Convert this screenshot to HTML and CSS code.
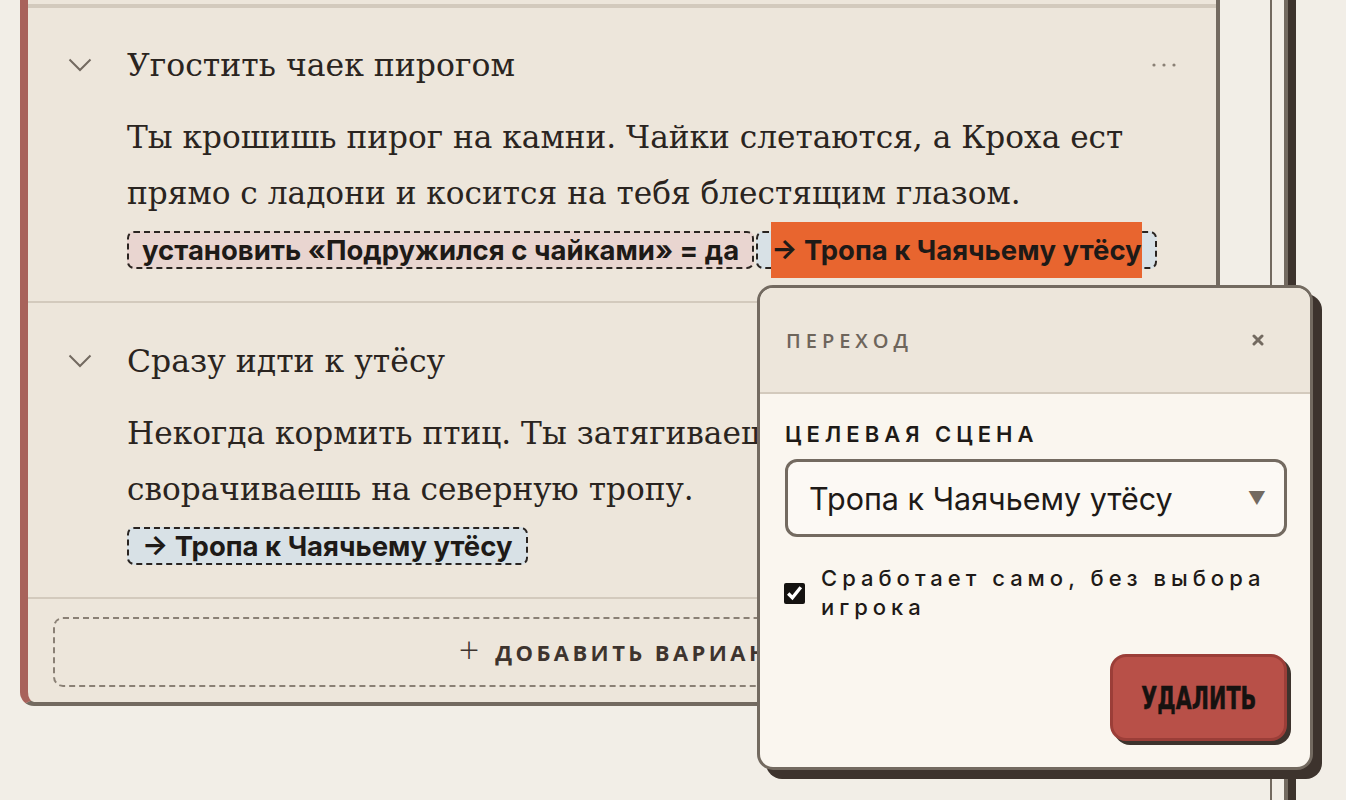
FILE: index.html
```html
<!DOCTYPE html>
<html lang="ru">
<head>
<meta charset="utf-8">
<title>Варианты сцены</title>
<link rel="stylesheet" href="styles.css">
</head>
<body>
<div class="workspace">
  <section class="card">
    <ul class="choices">
      <li class="choice choice--first">
        <div class="choice-head">
          <svg class="chevron" width="24" height="14" viewBox="0 0 24 14" aria-hidden="true"><polyline points="1.5,1.5 12,12 22.5,1.5" fill="none" stroke="currentColor" stroke-width="2"/></svg>
          <h3 class="choice-title">Угостить чаек пирогом</h3>
          <button class="more" type="button" aria-label="Ещё"><svg width="24" height="4" viewBox="0 0 24 4"><circle cx="2" cy="2" r="1.6" fill="currentColor"/><circle cx="12" cy="2" r="1.6" fill="currentColor"/><circle cx="22" cy="2" r="1.6" fill="currentColor"/></svg></button>
        </div>
        <div class="choice-body">
          <p class="choice-text">Ты крошишь пирог на камни. Чайки слетаются, а Кроха ест прямо с ладони и косится на тебя блестящим глазом.</p>
          <div class="effects"><span class="chip chip--set">установить «Подружился с чайками» = да</span><span class="chip chip--goto"><span class="chip-label chip-label--active">→ Тропа к Чаячьему утёсу</span></span></div>
        </div>
      </li>
      <li class="choice">
        <div class="choice-head">
          <svg class="chevron" width="24" height="14" viewBox="0 0 24 14" aria-hidden="true"><polyline points="1.5,1.5 12,12 22.5,1.5" fill="none" stroke="currentColor" stroke-width="2"/></svg>
          <h3 class="choice-title">Сразу идти к утёсу</h3>
          <button class="more" type="button" aria-label="Ещё"><svg width="24" height="4" viewBox="0 0 24 4"><circle cx="2" cy="2" r="1.6" fill="currentColor"/><circle cx="12" cy="2" r="1.6" fill="currentColor"/><circle cx="22" cy="2" r="1.6" fill="currentColor"/></svg></button>
        </div>
        <div class="choice-body">
          <p class="choice-text">Некогда кормить птиц. Ты затягиваешь ремень сумки и сворачиваешь на северную тропу.</p>
          <div class="effects"><span class="chip chip--goto"><span class="chip-label">→ Тропа к Чаячьему утёсу</span></span></div>
        </div>
      </li>
    </ul>
    <div class="add-row">
      <button class="add-choice" type="button"><span class="add-plus">+</span>Добавить вариант</button>
    </div>
  </section>

  <div class="rail"></div>

  <div class="popover" role="dialog" aria-label="Переход">
    <div class="popover-head">
      <span class="popover-title">Переход</span>
      <button class="popover-close" type="button" aria-label="Закрыть"><svg width="12" height="12" viewBox="0 0 12 12"><path d="M2 2 L10 10 M10 2 L2 10" stroke="currentColor" stroke-width="3" stroke-linecap="round"/></svg></button>
    </div>
    <div class="popover-body">
      <div class="field-label">Целевая сцена</div>
      <div class="select">
        <span class="select-value">Тропа к Чаячьему утёсу</span>
        <span class="select-arrow">▼</span>
      </div>
      <label class="check-row">
        <input class="check" type="checkbox" checked>
        <span class="check-text">Сработает само, без выбора игрока</span>
      </label>
      <div class="popover-actions">
        <button class="btn-delete" type="button"><span class="btn-delete-text">Удалить</span></button>
      </div>
    </div>
  </div>
</div>
</body>
</html>
```

FILE: styles.css
```css
* { box-sizing: border-box; }

body {
  margin: 0;
  background: #f2eee7;
  color: #2a2420;
  font-family: "DejaVu Serif", "Liberation Serif", serif;
  overflow: hidden;
}

button {
  font: inherit;
  color: inherit;
  background: none;
  border: 0;
  padding: 0;
  cursor: pointer;
}

.workspace {
  position: relative;
  display: flex;
  align-items: flex-start;
  gap: 50px;
  height: 800px;
  padding-left: 20px;
}

/* ---------- choice card ---------- */

.card {
  flex: 0 0 1200px;
  background: #ede6db;
  border-left: 8px solid #a8625b;
  border-right: 4px solid #736a60;
  border-bottom: 4px solid #736a60;
  border-radius: 0 0 14px 14px;
  padding-top: 4px;
}

.choices {
  list-style: none;
  margin: 0;
  padding: 0;
}

.choice {
  border-top: 2px solid #d3cabd;
  padding: 38px 40px 23px 40px;
}

.choice--first {
  border-top-width: 4px;
  padding-top: 37px;
}

.choice-head {
  display: flex;
  align-items: center;
  height: 40px;
}

.chevron {
  color: #736a60;
  flex: none;
  margin-right: 35px;
}

.choice-title {
  flex: 1;
  margin: 0;
  font-size: 31.5px;
  font-weight: normal;
  line-height: 40px;
}

.more {
  color: #8a8075;
  display: flex;
  align-items: center;
}

.choice-body {
  margin: 24px 0 0 59px;
}

.choice-text {
  margin: 0;
  font-size: 31.2px;
  line-height: 56px;
}

.effects {
  font-size: 31px;
  line-height: 56px;
}

.chip {
  font-family: Inter, "Noto Sans", sans-serif;
  font-weight: 700;
  font-size: 27.5px;
  color: #1e1a17;
  padding: 0 13px;
  border: 2px dashed #2a2420;
  border-radius: 7px;
}

.chip--set { background: #e9d5d0; }
.chip--goto { background: #d8e1e6; margin-left: 2px; }
.choice-body .effects .chip:first-child { margin-left: 0; }

.chip-label--active {
  display: inline-block;
  line-height: 56px;
  background: #e8652f;
}

.add-row {
  border-top: 2px solid #d3cabd;
  padding: 18px 25px 15px;
}

.add-choice {
  display: flex;
  align-items: center;
  justify-content: center;
  gap: 16px;
  width: 100%;
  height: 70px;
  border: 2px dashed #8a8075;
  border-radius: 10px;
  font-family: "Open Sans", sans-serif;
  font-weight: 700;
  font-size: 22px;
  letter-spacing: 3.4px;
  text-transform: uppercase;
  color: #3e342e;
}

.add-plus {
  font-weight: 300;
  font-size: 36px;
  line-height: 1;
  letter-spacing: 0;
  margin-top: -4px;
}

/* ---------- right rail ---------- */

.rail {
  flex: none;
  width: 18px;
  height: 100%;
  border-left: 2px solid #736a60;
  border-right: 4px solid #736a60;
  box-shadow: 8px 0 0 #3d332d;
}

/* ---------- transition popover ---------- */

.popover {
  position: absolute;
  left: 757px;
  top: 285px;
  width: 556px;
  background: #faf6ef;
  border: 3px solid #736a60;
  border-radius: 16px;
  box-shadow: 9px 9px 0 #3d332d;
  overflow: hidden;
  font-family: Inter, "Noto Sans", sans-serif;
}

.popover-head {
  display: flex;
  align-items: center;
  justify-content: space-between;
  height: 106px;
  padding: 0 32px 0 26px;
  background: #ede6db;
  border-bottom: 2px solid #d3cabd;
}

.popover-title {
  font-family: "Open Sans", sans-serif;
  font-weight: 600;
  font-size: 20px;
  letter-spacing: 5px;
  text-transform: uppercase;
  color: #6e655b;
}

.popover-close {
  width: 40px;
  height: 40px;
  display: flex;
  align-items: center;
  justify-content: center;
  color: #736a60;
}

.popover-body {
  padding: 26px 23px 26px 25px;
}

.field-label {
  font-weight: 600;
  font-size: 22px;
  line-height: 28px;
  letter-spacing: 5px;
  text-transform: uppercase;
  color: #1e1a17;
  margin-bottom: 11px;
}

.select {
  display: flex;
  align-items: center;
  justify-content: space-between;
  height: 78px;
  padding: 0 18px 0 21px;
  border: 3px solid #736a60;
  border-radius: 12px;
  background: #fcf9f4;
}

.select-value {
  font-size: 30.5px;
  color: #1e1a17;
}

.select-arrow {
  font-size: 18px;
  color: #736a60;
}

.check-row {
  display: flex;
  align-items: center;
  gap: 16px;
  margin-top: 27px;
}

.check {
  flex: none;
  width: 21px;
  height: 21px;
  margin: 0 0 0 -1px;
  accent-color: #141210;
}

.check-text {
  font-weight: 500;
  font-size: 22px;
  line-height: 29px;
  letter-spacing: 5px;
  color: #1e1a17;
}

.popover-actions {
  display: flex;
  justify-content: flex-end;
  margin-top: 32px;
}

.btn-delete {
  display: flex;
  align-items: center;
  justify-content: center;
  width: 177px;
  height: 87px;
  background: #b85048;
  border: 3px solid #9b3e38;
  border-radius: 16px;
  box-shadow: 4px 4px 0 #3d332d;
  font-family: "Liberation Sans Narrow", "DejaVu Sans Condensed", sans-serif;
  font-weight: 700;
  font-size: 32px;
  text-transform: uppercase;
  color: #161210;
}

/* squeeze the label into a tall condensed look */
.btn-delete-text {
  display: inline-block;
  transform: scaleX(0.72);
  -webkit-text-stroke: 0.5px #161210;
}
```
